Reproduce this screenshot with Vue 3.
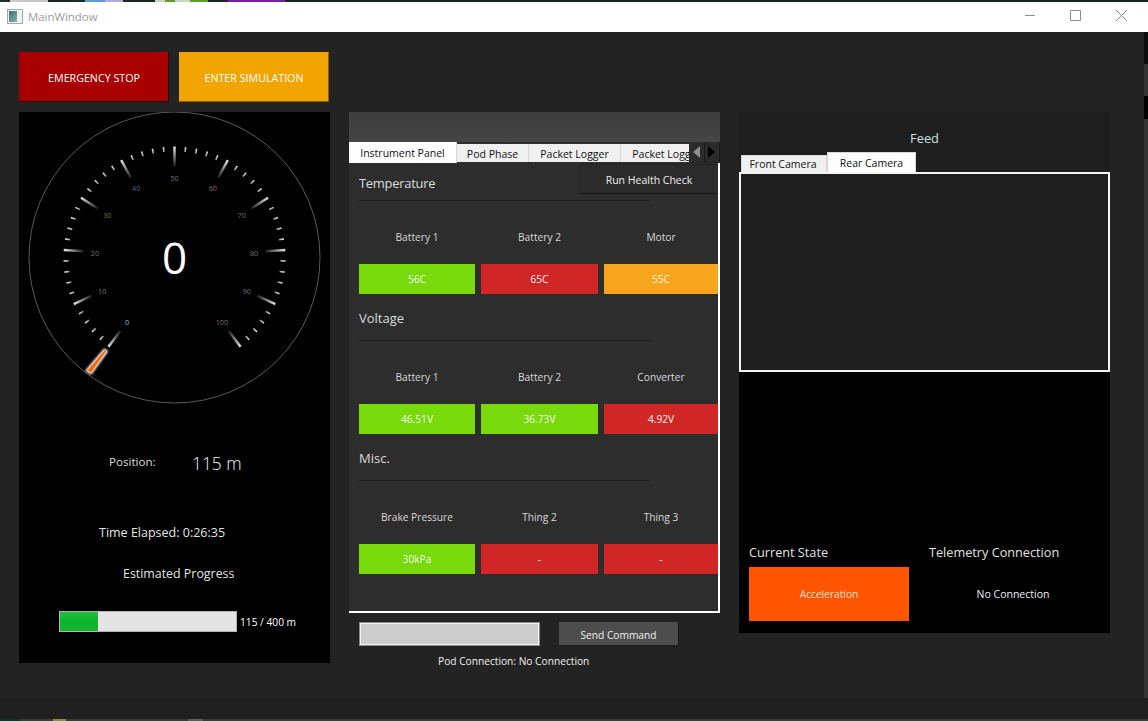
<script setup>
const cx = 155.5
const cy = 145.5
const ticks = []
for (let i = 0; i <= 50; i++) {
  const major = i % 5 === 0
  const a = ((-143.5 + i * 5.74) * Math.PI) / 180
  const inner = major ? 91 : 106
  ticks.push({
    id: "t" + i,
    major,
    x1: cx + 111 * Math.sin(a),
    y1: cy - 111 * Math.cos(a),
    x2: cx + inner * Math.sin(a),
    y2: cy - inner * Math.cos(a),
  })
}

const labelColors = ["#8fc4e0", "#6f7d88", "#757565", "#70705c", "#566a80", "#6a7680", "#85705f", "#70705f", "#6a7a80", "#647684", "#80705f"]
const labels = labelColors.map((color, i) => {
  const a = ((-143.5 + i * 28.7) * Math.PI) / 180
  return {
    text: String(i * 10),
    color,
    x: cx + 79.7 * Math.sin(a),
    y: cy - 79.7 * Math.cos(a) + 3.5,
  }
})

const sections = [
  {
    title: "Temperature",
    cells: [
      { label: "Battery 1", value: "56C", tone: "good" },
      { label: "Battery 2", value: "65C", tone: "bad" },
      { label: "Motor", value: "55C", tone: "warn" },
    ],
  },
  {
    title: "Voltage",
    cells: [
      { label: "Battery 1", value: "46.51V", tone: "good" },
      { label: "Battery 2", value: "36.73V", tone: "good" },
      { label: "Converter", value: "4.92V", tone: "bad" },
    ],
  },
  {
    title: "Misc.",
    cells: [
      { label: "Brake Pressure", value: "30kPa", tone: "good" },
      { label: "Thing 2", value: "-", tone: "bad" },
      { label: "Thing 3", value: "-", tone: "bad" },
    ],
  },
]
</script>

<template>
  <div class="window">
    <div class="desktop-strip"></div>
    <header class="titlebar">
      <div class="app-icon"><span></span></div>
      <span class="app-title">MainWindow</span>
      <svg class="controls" width="122" height="14" viewBox="0 0 122 14">
        <path d="M0 6.5H10" stroke="#8c8c8c" fill="none" />
        <path d="M45.5 1.5H55.5V11.5H45.5Z" stroke="#8c8c8c" fill="none" />
        <path d="M91 1L102 12M102 1L91 12" stroke="#8c8c8c" fill="none" />
      </svg>
    </header>

    <main class="content">
      <div class="top-buttons">
        <button class="big-btn stop">EMERGENCY STOP</button>
        <button class="big-btn sim">ENTER SIMULATION</button>
      </div>

      <section class="left-panel">
        <svg class="gauge" width="311" height="300" viewBox="0 0 311 300">
          <defs>
            <linearGradient
              v-for="t in ticks"
              :id="t.id"
              :key="t.id"
              gradientUnits="userSpaceOnUse"
              :x1="t.x1"
              :y1="t.y1"
              :x2="t.x2"
              :y2="t.y2"
            >
              <stop offset="0" stop-color="#e4e4e4" />
              <stop offset="1" :stop-color="t.major ? '#1a1a1a' : '#9a9a9a'" />
            </linearGradient>
            <filter id="glow" x="-60%" y="-60%" width="220%" height="220%">
              <feGaussianBlur stdDeviation="0.8" />
            </filter>
          </defs>
          <circle :cx="cx" :cy="cy" r="145.5" fill="none" stroke="#5a5a5a" stroke-width="1" />
          <line
            v-for="t in ticks"
            :key="t.id + 'l'"
            :x1="t.x1"
            :y1="t.y1"
            :x2="t.x2"
            :y2="t.y2"
            :stroke="`url(#${t.id})`"
            :stroke-width="t.major ? 2.5 : 1.6"
          />
          <text
            v-for="l in labels"
            :key="l.text"
            :x="l.x"
            :y="l.y"
            :fill="l.color"
            text-anchor="middle"
            class="gauge-label"
          >{{ l.text }}</text>
          <polygon points="85.5,238 87.5,239.5 72,261 68,258.5" fill="#fff" filter="url(#glow)" stroke="#fff" stroke-width="2.5" />
          <polygon points="85.6,238.2 87,239.4 72,260.6 68.4,258.4" fill="#ff6400" />
          <text :x="cx" y="162" fill="#fff" text-anchor="middle" class="gauge-value">0</text>
        </svg>

        <div class="position-row">
          <span class="pos-label">Position:</span>
          <span class="pos-value">115 m</span>
        </div>
        <div class="elapsed">Time Elapsed: 0:26:35</div>
        <div class="estimate">Estimated Progress</div>
        <div class="progress-row">
          <div class="progress"><div class="progress-fill"></div></div>
          <span class="progress-text">115 / 400 m</span>
        </div>
      </section>

      <div class="center-col">
        <section class="center-panel">
          <div class="band"></div>
          <div class="tabs">
            <div class="tab active">Instrument Panel</div>
            <div class="tab pod">Pod Phase</div>
            <div class="tab logger">Packet Logger</div>
            <div class="tab clipped">Packet Logger</div>
            <div class="scroller">
              <div class="arrow-btn"><span class="arrow-left"></span></div>
              <div class="arrow-btn"><span class="arrow-right"></span></div>
            </div>
          </div>
          <div class="pane">
            <button class="health-btn">Run Health Check</button>
            <div v-for="s in sections" :key="s.title" class="group">
              <h3 class="group-title">{{ s.title }}</h3>
              <div class="cell-grid">
                <span v-for="c in s.cells" :key="c.label" class="cell-label">{{ c.label }}</span>
                <span v-for="c in s.cells" :key="c.label + 'v'" :class="['cell-value', c.tone]">{{ c.value }}</span>
              </div>
            </div>
          </div>
        </section>
        <div class="command-row">
          <div class="command-input"></div>
          <button class="send-btn">Send Command</button>
        </div>
        <div class="pod-connection">Pod Connection: No Connection</div>
      </div>

      <section class="right-panel">
        <div class="feed-title">Feed</div>
        <div class="cam-tabs">
          <div class="cam-tab front">Front Camera</div>
          <div class="cam-tab rear">Rear Camera</div>
        </div>
        <div class="cam-pane"></div>
        <div class="status">
          <div class="status-col">
            <div class="status-title">Current State</div>
            <div class="state-box">Acceleration</div>
          </div>
          <div class="status-col">
            <div class="status-title">Telemetry Connection</div>
            <div class="telemetry-box">No Connection</div>
          </div>
        </div>
      </section>
      <div class="desktop-edge"></div>
    </main>
    <div class="footer-strip"></div>
    <div class="taskbar-edge"></div>
  </div>
</template>

<style>
html,
body {
  margin: 0;
  background: #1f1f1f;
  overflow: hidden;
}
</style>

<style scoped>
.window {
  width: 1148px;
  height: 721px;
  display: flex;
  flex-direction: column;
  font-family: "Open Sans", "Noto Sans", sans-serif;
  font-size: 10.2px;
  color: #fff;
  background: #232323;
  overflow: hidden;
}

.desktop-strip {
  height: 2px;
  flex: none;
  background: linear-gradient(
    90deg,
    #20302a 0 10px,
    #c8c8c8 10px 48px,
    #1d2a24 48px 85px,
    #5a9bd8 85px 105px,
    #b0a8e0 105px 123px,
    #1d2a24 123px 155px,
    #c8d8c0 155px 165px,
    #5aa02a 165px 175px,
    #c8d8c0 175px 190px,
    #5aa02a 190px 208px,
    #1d2a24 208px 228px,
    #7a1fa0 228px 285px,
    #14261e 285px
  );
}

.titlebar {
  height: 30px;
  flex: none;
  background: #fff;
  display: flex;
  align-items: center;
  padding-left: 7px;
}

.app-icon {
  width: 12px;
  height: 11px;
  border: 1px solid #a8a8a8;
  background: #eef2f2;
  display: flex;
  padding: 1px;
  margin-top: -1px;
}

.app-icon span {
  width: 8px;
  background: linear-gradient(135deg, #3b6f7a, #8fb0a8);
}

.app-title {
  margin-left: 5px;
  font-size: 11.4px;
  color: #9b9b9b;
  margin-top: -1px;
}

.controls {
  margin-left: auto;
  margin-right: 1px;
  margin-top: -3px;
}

.content {
  flex: 1;
  position: relative;
  display: grid;
  grid-template-columns: 311px 371px 371px;
  grid-template-rows: 50px auto;
  column-gap: 19px;
  row-gap: 10px;
  padding: 20px 0 0 19px;
  align-content: start;
}

.desktop-edge {
  position: absolute;
  top: 0;
  right: 0;
  bottom: 0;
  width: 4px;
  background: linear-gradient(
    180deg,
    #0c0c0c 0 32px,
    #333 32px 64px,
    #000 64px 87px,
    #333 87px
  );
}

.top-buttons {
  grid-column: 1 / -1;
  display: flex;
  gap: 10px;
}

.big-btn {
  width: 150px;
  height: 50px;
  border: 1px solid;
  font: inherit;
  font-size: 10.7px;
  color: #fff;
  padding: 2px 0 0;
}

.stop {
  background: #a80000;
  border-color: #a80000 #3a0000 #3a0000 #a80000;
}

.sim {
  background: #f2a500;
  border-color: #f2a500 #8a6000 #8a6000 #f2a500;
}

.left-panel {
  height: 551px;
  background: #000;
  display: flex;
  flex-direction: column;
}

.gauge {
  display: block;
  flex: none;
}

.gauge-label {
  font-size: 7.2px;
}

.gauge-value {
  font-size: 44px;
}

.position-row {
  margin-top: 40px;
  height: 22px;
  display: flex;
  align-items: center;
  padding-left: 90px;
}

.pos-label {
  width: 83px;
  font-size: 11.6px;
  color: #d8d8d8;
  margin-top: -4px;
}

.pos-value {
  font-size: 17.4px;
  color: #f0f4f6;
  font-weight: 300;
}

.elapsed {
  margin-top: 49px;
  padding-left: 80px;
  font-size: 12.5px;
  line-height: 20px;
  color: #e4e4e4;
}

.estimate {
  margin-top: 20px;
  padding-left: 104px;
  font-size: 12.4px;
  line-height: 21px;
  color: #e4e4e4;
}

.progress-row {
  margin-top: 27px;
  padding-left: 40px;
  display: flex;
  align-items: center;
}

.progress {
  width: 178px;
  height: 21px;
  box-sizing: border-box;
  border: 1px solid #b4b4b4;
  background: #e4e4e4;
}

.progress-fill {
  width: 38px;
  height: 100%;
  background: linear-gradient(180deg, #1fc03f, #0fb52d 45%);
}

.progress-text {
  margin-left: 3px;
}

.center-col {
  display: flex;
  flex-direction: column;
}

.center-panel {
  height: 501px;
  display: flex;
  flex-direction: column;
}

.band {
  height: 30px;
  flex: none;
  background: linear-gradient(180deg, #3e3e3e, #454545);
}

.tabs {
  height: 21px;
  flex: none;
  display: flex;
  align-items: flex-start;
  background: #2d2d2d;
  position: relative;
  overflow: hidden;
  color: #111;
  font-size: 10.5px;
}

.tab {
  height: 18px;
  margin-top: 2px;
  background: #f0f0f0;
  border-right: 1px solid #d8d8d8;
  box-sizing: border-box;
  display: flex;
  align-items: center;
  justify-content: center;
  white-space: nowrap;
  flex: none;
  padding-top: 2px;
}

.tab.active {
  width: 108px;
  height: 21px;
  margin-top: 0;
  background: #fff;
  padding: 0;
}

.tab.pod {
  width: 72px;
}

.tab.logger {
  width: 92px;
}

.tab.clipped {
  width: 92px;
}

.scroller {
  position: absolute;
  top: 0;
  left: 340px;
  width: 31px;
  height: 21px;
  background: #232323;
  display: flex;
}

.arrow-btn {
  width: 15px;
  height: 20px;
  background: #2b2b2b;
  border-right: 1px solid #1a1a1a;
  display: flex;
  align-items: center;
  justify-content: center;
}

.arrow-left {
  border: 6px solid transparent;
  border-left: 0;
  border-right: 7px solid #8c8c8c;
}

.arrow-right {
  border: 6px solid transparent;
  border-right: 0;
  border-left: 7px solid #000;
}

.pane {
  flex: 1;
  position: relative;
  background: #2d2d2d;
  border-right: 2px solid #fff;
  border-bottom: 2px solid #fff;
  padding-left: 10px;
  padding-top: 7px;
}

.health-btn {
  position: absolute;
  top: 1px;
  right: 0;
  width: 139px;
  height: 30px;
  background: #2b2b2b;
  border: 0;
  border-top: 1px solid #242424;
  border-left: 1px solid #242424;
  border-bottom: 1px solid #161616;
  color: #f0f0f0;
  font: inherit;
  font-size: 10.5px;
  padding: 2px 0 0;
}

.group {
  height: 140px;
}

.group-title {
  margin: 0;
  box-sizing: border-box;
  width: 291px;
  height: 31px;
  font-size: 13px;
  font-weight: 400;
  line-height: 16px;
  color: #dcdcdc;
  border-bottom: 1px solid #1e1e1e;
}

.group:nth-child(2) .group-title {
  padding-top: 5px;
  letter-spacing: -0.3px;
}

.cell-grid {
  display: grid;
  grid-template-columns: 116px 117px 114px;
  grid-template-rows: 63px 30px;
  column-gap: 6px;
  align-items: stretch;
}

.cell-label {
  display: flex;
  align-items: center;
  justify-content: center;
  padding-top: 9px;
  color: #d8d8d8;
}

.cell-value {
  display: flex;
  align-items: center;
  justify-content: center;
  color: #f4f4f4;
}

.good {
  background: #78d90b;
}

.bad {
  background: #d12626;
}

.warn {
  background: #f6a51c;
}

.command-row {
  margin-top: 9px;
  padding-left: 10px;
  display: flex;
  gap: 19px;
}

.command-input {
  width: 181px;
  height: 24px;
  box-sizing: border-box;
  background: #cccccc;
  border: 1px solid #8a8a8a;
  box-shadow: inset 0 0 0 1px #f4f4f4;
}

.send-btn {
  width: 120px;
  height: 24px;
  background: #4d4d4d;
  border: 0;
  border-bottom: 1px solid #1a1a1a;
  border-right: 1px solid #1a1a1a;
  color: #f0f0f0;
  font: inherit;
  padding: 2px 0 0;
}

.pod-connection {
  margin-top: 7px;
  padding-left: 89px;
  line-height: 16px;
  color: #f0f0f0;
}

.right-panel {
  height: 521px;
  background: #000;
  display: flex;
  flex-direction: column;
}

.feed-title {
  height: 40px;
  flex: none;
  background: #1e1e1e;
  text-align: center;
  font-size: 12.8px;
  line-height: 53px;
  color: #cfe2ea;
}

.cam-tabs {
  height: 21px;
  flex: none;
  display: flex;
  align-items: flex-end;
  padding-left: 2px;
  background: #1e1e1e;
  color: #111;
  font-size: 10.5px;
}

.cam-tab {
  box-sizing: border-box;
  display: flex;
  align-items: center;
  justify-content: center;
}

.front {
  width: 86px;
  height: 18px;
  background: #f0f0f0;
  border: 1px solid #d8d8d8;
  border-bottom: 1px solid #555;
  padding-right: 2px;
}

.rear {
  width: 89px;
  height: 21px;
  background: #fff;
  border: 1px solid #d8d8d8;
  border-bottom: 0;
}

.cam-pane {
  height: 200px;
  flex: none;
  box-sizing: border-box;
  margin-top: -1px;
  border: 2px solid #f4f4f4;
  background: #1e1e1e;
}

.status {
  display: flex;
  padding: 170px 0 0 10px;
}

.status-col {
  width: 180px;
}

.status-title {
  height: 20px;
  font-size: 12.7px;
  line-height: 20px;
  color: #e0e0e0;
}

.state-box {
  width: 160px;
  height: 54px;
  margin-top: 5px;
  display: flex;
  align-items: center;
  justify-content: center;
  background: #ff5500;
  color: #f4e0d0;
}

.telemetry-box {
  width: 168px;
  height: 54px;
  margin-top: 5px;
  display: flex;
  align-items: center;
  justify-content: center;
  font-size: 10.5px;
  color: #e8f0f4;
}

.footer-strip {
  height: 21px;
  flex: none;
  background: #202020;
}

.taskbar-edge {
  height: 2px;
  flex: none;
  background: linear-gradient(
    90deg,
    #12322a 0 20px,
    #3a3a3a 20px 53px,
    #8c8a50 53px 66px,
    #3a3a3a 66px 188px,
    #5c5c5c 188px 203px,
    #3a3a3a 203px
  );
}
</style>
